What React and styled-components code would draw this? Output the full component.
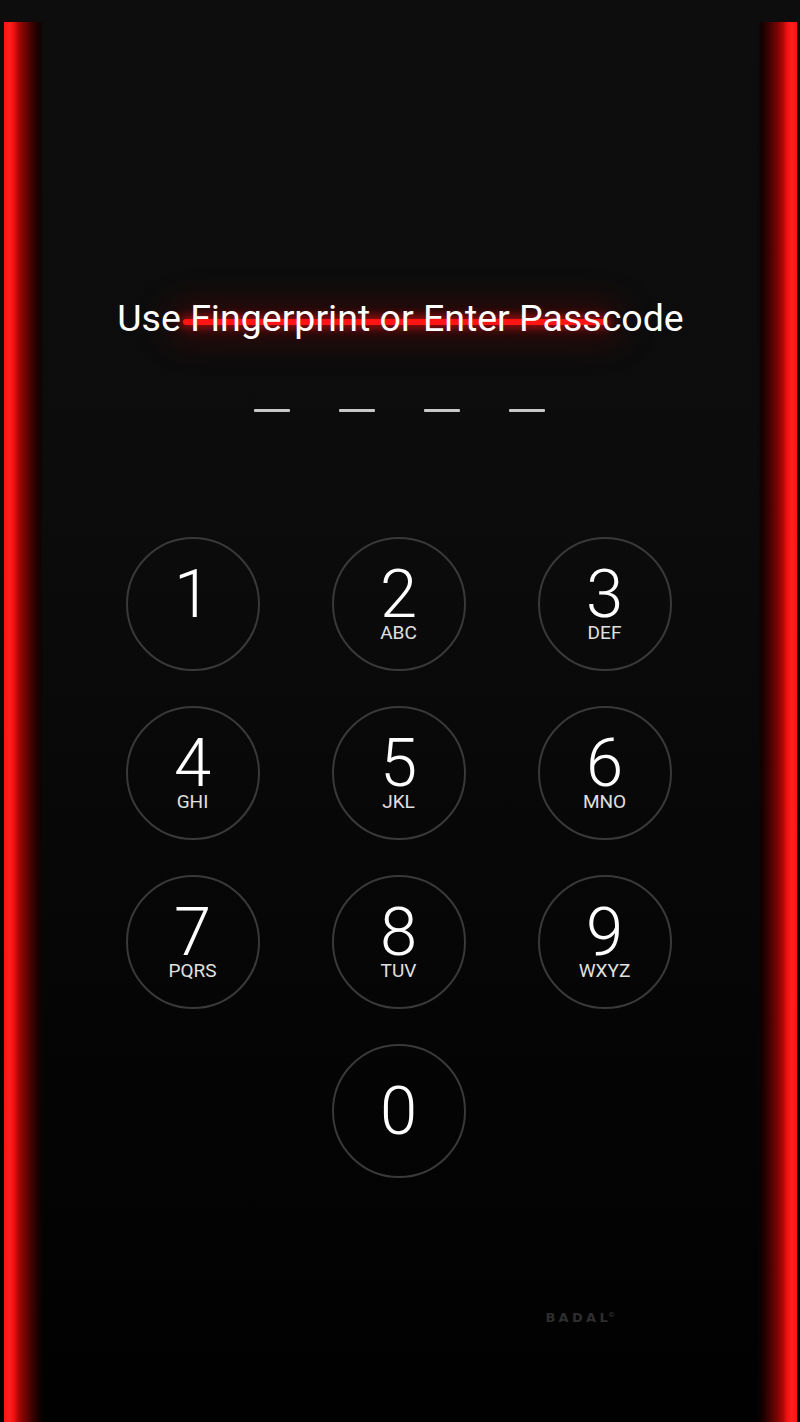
import styled, { createGlobalStyle } from 'styled-components';

const GlobalStyle = createGlobalStyle`
  html, body {
    margin: 0;
    padding: 0;
    background: #000;
  }
  * {
    box-sizing: border-box;
  }
`;

const Screen = styled.div`
  width: 800px;
  height: 1422px;
  overflow: hidden;
  display: flex;
  padding: 22px 3px 0 4px;
  background: linear-gradient(to bottom, #0d0d0d 0%, #0c0c0c 35%, #060606 65%, #010101 100%);
  font-family: Roboto, "Liberation Sans", sans-serif;
`;

// red neon strips down both edges
const EdgeGlow = styled.div`
  width: 40px;
  flex: none;
  background: linear-gradient(
    ${(p) => (p.$side === 'right' ? 'to left' : 'to right')},
    #ff1111 0px,
    #ff1f1f 5px,
    #f01010 10px,
    #b00808 14px,
    #7a0404 20px,
    #3e0202 28px,
    #150000 35px,
    rgba(0, 0, 0, 0) 40px
  );
`;

const Main = styled.main`
  flex: 1;
  display: flex;
  flex-direction: column;
  align-items: center;
  padding-top: 271px;
`;

const TitleWrap = styled.div`
  position: relative;

  &::before {
    content: '';
    position: absolute;
    left: 66px;
    right: 76px;
    top: 26px;
    height: 6px;
    border-radius: 3px;
    background: #ff1414;
    box-shadow: 0 0 10px 3px rgba(255, 20, 20, 0.55), 0 0 34px 12px rgba(150, 0, 0, 0.35);
  }
`;

const Title = styled.h1`
  position: relative;
  margin: 0;
  font-size: 37.5px;
  font-weight: 400;
  line-height: 50px;
  color: #fff;
  white-space: nowrap;
`;

const Dashes = styled.div`
  display: flex;
  gap: 49px;
  margin-top: 66px;
  margin-left: -2px;
`;

const Dash = styled.span`
  width: 36px;
  height: 3px;
  background: #c8c8c8;
  border-radius: 1px;
`;

const Keypad = styled.div`
  display: grid;
  grid-template-columns: repeat(3, 134px);
  column-gap: 72px;
  row-gap: 35px;
  margin-top: 125px;
  margin-left: -4px;
`;

const Key = styled.div`
  width: 134px;
  height: 134px;
  border-radius: 50%;
  border: 2px solid #393939;
  display: flex;
  flex-direction: column;
  align-items: center;
  justify-content: center;
  color: #fff;
  grid-column: ${(p) => p.$col || 'auto'};
`;

const Digit = styled.span`
  font-size: 67px;
  font-weight: 300;
  line-height: 56px;
`;

const Letters = styled.span`
  font-size: 19px;
  font-weight: 400;
  line-height: 20px;
  color: #e0e0e0;
  margin-top: 1px;
  visibility: ${(p) => (p.$empty ? 'hidden' : 'visible')};
`;

const Signature = styled.div`
  align-self: flex-end;
  margin-top: 132px;
  margin-right: 142px;
  font-family: "DejaVu Sans", sans-serif;
  font-size: 13px;
  font-weight: 700;
  letter-spacing: 3.3px;
  color: #2e2e2e;

  sup {
    font-size: 7px;
    letter-spacing: 0;
    margin-left: -3px;
  }
`;

const keys = [
  { d: '1', l: '' },
  { d: '2', l: 'ABC' },
  { d: '3', l: 'DEF' },
  { d: '4', l: 'GHI' },
  { d: '5', l: 'JKL' },
  { d: '6', l: 'MNO' },
  { d: '7', l: 'PQRS' },
  { d: '8', l: 'TUV' },
  { d: '9', l: 'WXYZ' },
];

const App = () => (
  <>
    <GlobalStyle />
    <Screen>
      <EdgeGlow $side="left" />
      <Main>
        <TitleWrap>
          <Title>Use Fingerprint or Enter Passcode</Title>
        </TitleWrap>
        <Dashes>
          <Dash />
          <Dash />
          <Dash />
          <Dash />
        </Dashes>
        <Keypad>
          {keys.map((k) => (
            <Key key={k.d}>
              <Digit>{k.d}</Digit>
              <Letters $empty={!k.l}>{k.l || '-'}</Letters>
            </Key>
          ))}
          <Key $col={2}>
            <Digit>0</Digit>
          </Key>
        </Keypad>
        <Signature>
          BADAL<sup>©</sup>
        </Signature>
      </Main>
      <EdgeGlow $side="right" />
    </Screen>
  </>
);

export default App;
